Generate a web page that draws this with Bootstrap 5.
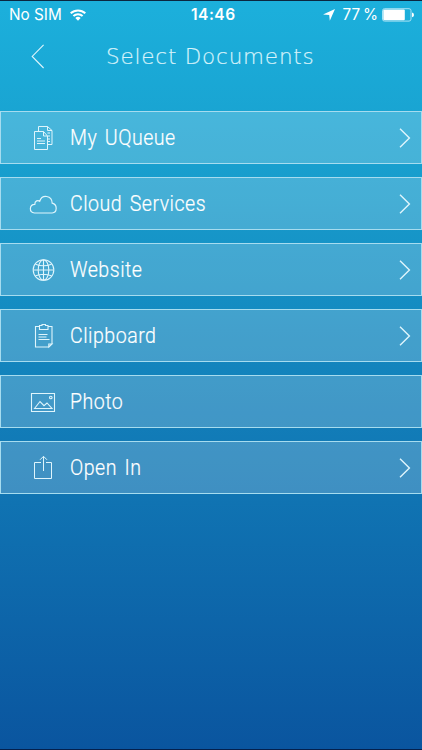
<!DOCTYPE html>
<html lang="en">
<head>
  <meta charset="UTF-8">
  <title>Select Documents</title>
  <meta name="viewport" content="width=device-width, initial-scale=1">
  <link href="https://cdn.jsdelivr.net/npm/bootstrap@5.3.3/dist/css/bootstrap.min.css" rel="stylesheet">
  <style>
    body {
      height: 750px;
      overflow: hidden;
      background: linear-gradient(to bottom, #1cb0dc 0%, #189fce 22%, #127eb9 55%, #0a559f 100%);
      border-top: 1px solid #0b2740;
      border-bottom: 1px solid #04204d;
      color: #fff;
      font-family: Inter, "Liberation Sans", sans-serif;
    }
    svg {
      display: block;
      fill: none;
      stroke: #dff5fc;
      flex-shrink: 0;
    }
    .status-bar {
      height: 28px;
      padding: 0 8px 0 9px;
      font-size: 15.3px;
      line-height: 28px;
    }
    .status-bar svg {
      fill: #fff;
      stroke: none;
    }
    .carrier {
      width: 182px;
    }
    .clock {
      font-weight: 600;
      font-size: 15.5px;
      letter-spacing: .5px;
    }
    .title-bar {
      height: 82px;
      padding-left: 31px;
    }
    .title-bar h1 {
      margin: 16px 0 0 61px;
      font: 200 21.5px/24px "DejaVu Sans", "DejaVu Sans Light", sans-serif;
      letter-spacing: .8px;
      color: #d8f3fb;
      white-space: nowrap;
      -webkit-text-stroke: .2px #d8f3fb;
    }
    .title-bar svg {
      margin-top: 15px;
    }
    .menu-list {
      gap: 13px;
    }
    .menu-row {
      height: 53px;
      padding: 0 10px 0 28px;
      background: rgba(255, 255, 255, .2);
      border: 1px solid #a6dcef;
      color: #fff;
      text-decoration: none;
    }
    .menu-row .label {
      margin-left: 12px;
      font: 300 21.5px/26px Roboto, "Liberation Sans", sans-serif;
      letter-spacing: .55px;
      word-spacing: 2.5px;
      white-space: nowrap;
      transform: scaleX(.91);
      transform-origin: left;
      -webkit-text-stroke: .2px #fff;
    }
  </style>
</head>
<body>
  <div class="status-bar d-flex align-items-center">
    <div class="carrier d-flex align-items-center">
      <span>No SIM</span>
      <svg class="ms-2" width="16" height="12" viewBox="0 0 16 12">
        <path d="M0 3.6a11.6 11.6 0 0 1 16 0L14.6 5.1a9.6 9.6 0 0 0-13.2 0zM2.7 6.3a7.8 7.8 0 0 1 10.6 0L11.9 7.8a5.8 5.8 0 0 0-7.8 0zM5.3 9a4.1 4.1 0 0 1 5.4 0L8 11.8z"/>
      </svg>
    </div>
    <span class="clock">14:46</span>
    <div class="d-flex align-items-center ms-auto">
      <svg width="12" height="12" viewBox="0 0 12 12"><path d="M12 0 6.8 11.8 6.2 6.1 0 5.4z"/></svg>
      <span class="ms-2 me-1">77&#8201;%</span>
      <svg width="32" height="14" viewBox="0 0 32 14">
        <rect x=".5" y=".7" width="28.5" height="12.4" rx="2" fill="none" stroke="#a8e2f4"/>
        <rect x="1.3" y="1.5" width="21.5" height="10.8" rx="1"/>
        <path d="M30 4.6q2 .5 2 2.3t-2 2.3z"/>
      </svg>
    </div>
  </div>

  <header class="title-bar d-flex align-items-start">
    <svg width="14" height="25" viewBox="0 0 14 25" stroke-width="1.1"><path d="M12.6.8 1.2 12.4 12.6 24"/></svg>
    <h1>Select Documents</h1>
  </header>

  <main class="menu-list d-flex flex-column">
    <a href="#" class="menu-row d-flex align-items-center">
      <svg width="29" height="28" viewBox="0 0 29 28" stroke-width="1">
        <path d="M9.5 7V2.5h9l4.5 4v14h-4M18.5 2.5v4H23M18.5 9h2.5M19 12h2M19 15h2M19 17.5h2"/>
        <path d="M5.5 7.5h9l4 4.500v13.500h-13zM14.500 7.500V12h4M8 14.500h4M8 17h8M8 19.500h8"/>
      </svg>
      <span class="label">My UQueue</span>
      <svg class="ms-auto" width="12" height="20" viewBox="0 0 12 20" stroke-width="1.4"><path d="m1 .8 9.400 9.200L1 19.200"/></svg>
    </a>
    <a href="#" class="menu-row d-flex align-items-center">
      <svg width="29" height="28" viewBox="0 0 29 28" stroke-width="1.2">
        <path d="M5.5 23C-.3 22.500.2 14.500 5.800 14.300 5.800 10.800 8.900 9.700 10.700 11.300 13 3.900 23 5.200 23.200 13.200 28.800 14.700 28.200 22.800 23.200 23z"/>
      </svg>
      <span class="label">Cloud Services</span>
      <svg class="ms-auto" width="12" height="20" viewBox="0 0 12 20" stroke-width="1.4"><path d="m1 .8 9.400 9.200L1 19.200"/></svg>
    </a>
    <a href="#" class="menu-row d-flex align-items-center">
      <svg width="29" height="28" viewBox="0 0 29 28" stroke-width="1.1">
        <circle cx="14.5" cy="14" r="10.300"/>
        <ellipse cx="14.5" cy="14" rx="5.300" ry="10.300"/>
        <path d="M14.500 4v20M4.500 14h20M6.500 8.200q8 3.200 16 0M6.500 19.800q8-3.200 16 0"/>
      </svg>
      <span class="label">Website</span>
      <svg class="ms-auto" width="12" height="20" viewBox="0 0 12 20" stroke-width="1.4"><path d="m1 .8 9.400 9.200L1 19.200"/></svg>
    </a>
    <a href="#" class="menu-row d-flex align-items-center">
      <svg width="29" height="28" viewBox="0 0 29 28" stroke-width="1.1">
        <path d="M10.5 4.500h-4v20.500H20l3-3v-17.500h-4M19.800 25v-3H23z"/>
        <path d="M10.5 7.500v-4H13v-1h3.500v1H19v4zM9.500 12.500h9M9.500 15h8M9.500 17.500h11"/>
      </svg>
      <span class="label">Clipboard</span>
      <svg class="ms-auto" width="12" height="20" viewBox="0 0 12 20" stroke-width="1.4"><path d="m1 .8 9.400 9.200L1 19.200"/></svg>
    </a>
    <a href="#" class="menu-row d-flex align-items-center">
      <svg width="29" height="28" viewBox="0 0 29 28" stroke-width="1.1">
        <path d="M2.5 5.500h23v18h-23z"/>
        <path d="m5.5 20.500 5.500-7 4 4.200 3-2.700 5 5.500z"/>
        <circle cx="21.800" cy="9.500" r="1.300"/>
      </svg>
      <span class="label">Photo</span>
    </a>
    <a href="#" class="menu-row d-flex align-items-center">
      <svg width="29" height="28" viewBox="0 0 29 28" stroke-width="1">
        <path d="M12 8.500H5.500v16h17v-16H17M14.500 17V2.500M11 5.800l3.500-3.500L18 5.800"/>
      </svg>
      <span class="label">Open In</span>
      <svg class="ms-auto" width="12" height="20" viewBox="0 0 12 20" stroke-width="1.4"><path d="m1 .8 9.400 9.200L1 19.200"/></svg>
    </a>
  </main>

  <script src="https://cdn.jsdelivr.net/npm/bootstrap@5.3.3/dist/js/bootstrap.bundle.min.js"></script>
</body>
</html>
